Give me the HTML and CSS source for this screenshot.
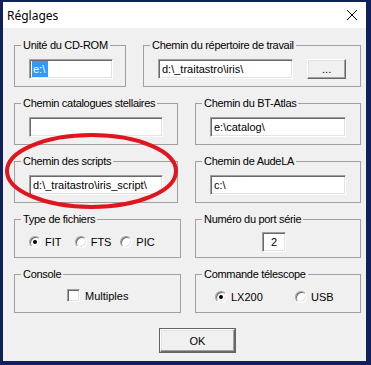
FILE: index.html
```html
<!DOCTYPE html>
<html lang="fr">
<head>
    <meta charset="UTF-8">
    <title>Réglages</title>
    <link rel="stylesheet" href="styles.css">
</head>
<body>
    <div class="window">
        <div class="titlebar">
            <span class="title">Réglages</span>
            <svg class="close" width="12" height="12" viewBox="0 0 12 12">
                <path d="M1 1 L11 11 M11 1 L1 11" stroke="#000" stroke-width="1" fill="none"/>
            </svg>
        </div>

        <div class="client">
            <div class="row">
                <fieldset class="group g-cdrom">
                    <legend>Unité du CD-ROM</legend>
                    <div class="inner">
                        <div class="edit edit-cdrom"><span class="sel">e:\</span></div>
                    </div>
                </fieldset>
                <fieldset class="group g-work">
                    <legend>Chemin du répertoire de travail</legend>
                    <div class="inner line">
                        <div class="edit edit-work">d:\_traitastro\iris\</div>
                        <button class="btn browse">...</button>
                    </div>
                </fieldset>
            </div>

            <div class="row">
                <fieldset class="group g-left">
                    <legend>Chemin catalogues stellaires</legend>
                    <div class="inner">
                        <div class="edit"></div>
                    </div>
                </fieldset>
                <fieldset class="group g-right">
                    <legend>Chemin du BT-Atlas</legend>
                    <div class="inner">
                        <div class="edit">e:\catalog\</div>
                    </div>
                </fieldset>
            </div>

            <div class="row">
                <fieldset class="group g-left">
                    <legend>Chemin des scripts</legend>
                    <div class="inner">
                        <div class="edit">d:\_traitastro\iris_script\</div>
                    </div>
                </fieldset>
                <fieldset class="group g-right">
                    <legend>Chemin de AudeLA</legend>
                    <div class="inner">
                        <div class="edit">c:\</div>
                    </div>
                </fieldset>
            </div>

            <div class="row">
                <fieldset class="group small g-left-wide">
                    <legend>Type de fichiers</legend>
                    <div class="inner options">
                        <label class="option"><span class="radio checked"></span>FIT</label>
                        <label class="option"><span class="radio"></span>FTS</label>
                        <label class="option"><span class="radio"></span>PIC</label>
                    </div>
                </fieldset>
                <fieldset class="group small g-right">
                    <legend>Numéro du port série</legend>
                    <div class="inner port">
                        <div class="edit edit-port">2</div>
                    </div>
                </fieldset>
            </div>

            <div class="row">
                <fieldset class="group small g-left-wide">
                    <legend>Console</legend>
                    <div class="inner console">
                        <label class="option"><span class="check"></span>Multiples</label>
                    </div>
                </fieldset>
                <fieldset class="group small g-right">
                    <legend>Commande télescope</legend>
                    <div class="inner options scope">
                        <label class="option opt-wide"><span class="radio checked"></span>LX200</label>
                        <label class="option"><span class="radio"></span>USB</label>
                    </div>
                </fieldset>
            </div>

            <div class="actions">
                <button class="btn ok">OK</button>
            </div>
        </div>

        <!-- red annotation drawn over the dialog -->
        <svg class="annot" width="371" height="365" viewBox="0 0 371 365">
            <ellipse cx="91.5" cy="171" rx="84.5" ry="36" fill="none" stroke="#e0151d" stroke-width="4"/>
        </svg>
    </div>
</body>
</html>
```

FILE: styles.css
```css
body {
    margin: 0;
    padding: 0;
    font-family: "Liberation Sans", Arial, sans-serif;
    font-size: 11px;
    color: #000;
}

.window {
    position: relative;
    width: 371px;
    height: 365px;
    box-sizing: border-box;
    border-style: solid;
    border-color: #10205a;
    border-width: 2px 5px 4px 3px;
    background-color: #f0f0f0;
    display: flex;
    flex-direction: column;
    overflow: hidden;
}

.titlebar {
    height: 26px;
    background-color: #fff;
    display: flex;
    align-items: center;
    justify-content: space-between;
    padding: 0 8px 0 4px;
    flex-shrink: 0;
}

.title {
    font-family: "Noto Sans", "Open Sans", sans-serif;
    font-size: 12px;
}

.close {
    display: block;
}

.client {
    flex: 1;
    padding: 11px 0 0 11px;
    display: flex;
    flex-direction: column;
    gap: 10px;
}

.row {
    display: flex;
}

.group {
    margin: 0;
    padding: 7px 0;
    border: 1px solid #a0a0a0;
    min-width: 0;
    box-sizing: border-box;
    font-size: 11px;
}

.group legend {
    margin-left: 6px;
    padding: 0 2px;
    line-height: 13px;
    font-size: 11px;
    white-space: nowrap;
    letter-spacing: -0.3px;
}

.group.small {
    padding-top: 6px;
    padding-bottom: 5px;
}

.inner {
    padding: 0 14px;
}

.g-cdrom { width: 112px; margin-right: 17px; }
.g-work { width: 218px; }
.g-left { width: 164px; margin-right: 17px; }
.g-right { width: 166px; }
.g-left-wide { width: 167px; margin-right: 14px; }

.edit {
    height: 20px;
    box-sizing: border-box;
    background-color: #fff;
    border-style: solid;
    border-width: 1px;
    border-color: #a0a0a0 #fff #fff #a0a0a0;
    box-shadow: inset 1px 1px 0 #696969, inset -1px -1px 0 #e3e3e3;
    padding: 0 3px;
    line-height: 18px;
    white-space: nowrap;
    overflow: hidden;
}

.edit-cdrom { width: 84px; padding-left: 2px; }

.sel {
    background-color: #3399ff;
    color: #fff;
    padding: 2px 3px 2px 1px;
}

.line {
    display: flex;
    align-items: center;
    gap: 14px;
}

.edit-work { width: 136px; }

.btn {
    font-family: "Liberation Sans", Arial, sans-serif;
    font-size: 11px;
    color: #000;
    background-color: #f0f0f0;
    border-style: solid;
    border-width: 1px;
    border-color: #fff #696969 #696969 #fff;
    box-shadow: inset -1px -1px 0 #a0a0a0, inset 1px 1px 0 #e3e3e3;
    padding: 0;
}

.browse {
    width: 39px;
    height: 20px;
    margin-top: -1px;
}

.options {
    display: flex;
    height: 20px;
    align-items: center;
}

.option {
    display: flex;
    align-items: center;
    gap: 4px;
    width: 50px;
}

.opt-wide { width: 80px; }

.radio {
    width: 12px;
    height: 12px;
    box-sizing: border-box;
    border-radius: 50%;
    border: 1px solid;
    border-color: #a0a0a0 #fff #fff #a0a0a0;
    box-shadow: inset 1px 1px 0 #696969, inset -1px -1px 0 #e3e3e3;
    background-color: #fff;
    display: flex;
    align-items: center;
    justify-content: center;
}

.radio.checked::after {
    content: "";
    width: 4px;
    height: 4px;
    border-radius: 50%;
    background-color: #000;
}

.check {
    width: 13px;
    height: 13px;
    box-sizing: border-box;
    border: 1px solid;
    border-color: #a0a0a0 #fff #fff #a0a0a0;
    box-shadow: inset 1px 1px 0 #696969, inset -1px -1px 0 #e3e3e3;
    background-color: #fff;
}

.port {
    padding-left: 66px;
}

.edit-port {
    width: 24px;
    text-align: center;
    padding: 0;
}

.console {
    padding-left: 52px;
    height: 20px;
    display: flex;
    align-items: center;
}

.console .option {
    width: auto;
    margin-top: -3px;
    gap: 5px;
}

.scope {
    padding-left: 19px;
}

.actions {
    display: flex;
    padding-left: 146px;
    margin-top: 6px;
}

.ok {
    width: 75px;
    height: 23px;
    box-shadow: 0 0 0 1px #646464, inset -1px -1px 0 #a0a0a0, inset 1px 1px 0 #e3e3e3;
}

.annot {
    position: absolute;
    left: -3px;
    top: -2px;
    pointer-events: none;
}
```
